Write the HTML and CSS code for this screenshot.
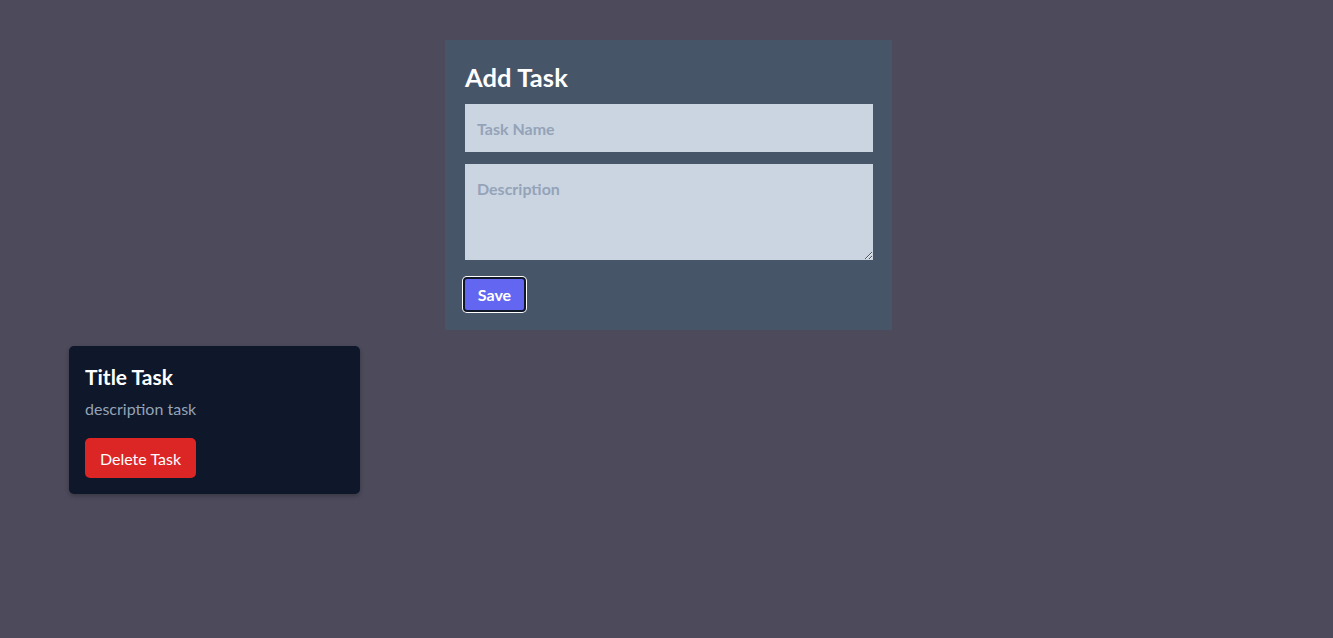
FILE: index.html
```html
<!DOCTYPE html>
<html lang="en">
<head>
<meta charset="utf-8">
<title>Tasks</title>
<link rel="stylesheet" href="styles.css">
</head>
<body>
<main class="page">
  <form class="task-form">
    <h2 class="form-title">Add Task</h2>
    <input class="field" type="text" placeholder="Task Name">
    <textarea class="field area" placeholder="Description"></textarea>
    <div class="actions"><button type="button" class="save-btn">Save</button></div>
  </form>
  <section class="task-list">
    <article class="task-card">
      <h3 class="task-title">Title Task</h3>
      <p class="task-desc">description task</p>
      <button type="button" class="delete-btn">Delete Task</button>
    </article>
  </section>
</main>
</body>
</html>
```
FILE: styles.css
```css
* { box-sizing: border-box; }
html, body { margin: 0; padding: 0; }
body {
  background: #4c4a5b;
  font-family: Lato, "Noto Sans", sans-serif;
  min-height: 638px;
}
.page {
  padding-top: 40px;
}
.task-form {
  width: 447px;
  margin: 0 0 16px 445px;
  background: #475569;
  padding: 22px 19px 18px 20px;
  display: flex;
  flex-direction: column;
}
.form-title {
  margin: 0 0 12px;
  color: #ffffff;
  font-size: 25.5px;
  font-weight: 700;
  line-height: 30px;
  letter-spacing: 0.1px;
}
.field {
  display: block;
  width: 408px;
  border: none;
  background: #cbd5e1;
  padding: 12px;
  font-family: Lato, "Noto Sans", sans-serif;
  font-size: 16px;
  font-weight: 700;
  color: #1e293b;
  outline: none;
}
.field::placeholder { color: #94a3b8; }
input.field { height: 48px; margin-bottom: 12px; }
.area { height: 96px; resize: vertical; padding-top: 15px; margin-bottom: 16px; }
.actions { display: flex; }
.save-btn {
  background: #6366f1;
  color: #ffffff;
  font-family: Lato, "Noto Sans", sans-serif;
  font-weight: 700;
  font-size: 16px;
  width: 63px;
  height: 35px;
  margin-left: -2px;
  border: 2px solid #111827;
  border-radius: 4px;
  box-shadow: 0 0 0 1px #ffffff;
  padding: 0;
  margin-top: 1px;
}
.task-list {
  padding-left: 69px;
  display: flex;
}
.task-card {
  width: 291px;
  background: #0f172a;
  border-radius: 5px;
  padding: 18px 16px 16px;
  box-shadow: 0 2px 4px rgba(0,0,0,0.25);
}
.task-title {
  margin: 0;
  color: #ffffff;
  font-size: 21px;
  font-weight: 700;
  line-height: 26px;
}
.task-desc {
  margin: 9px 0 19px;
  color: #94a3b8;
  font-size: 16px;
  line-height: 20px;
}
.delete-btn {
  background: #dc2626;
  color: #ffffff;
  border: none;
  border-radius: 5px;
  width: 111px;
  height: 40px;
  font-family: Lato, "Noto Sans", sans-serif;
  font-size: 16px;
  padding: 0;
}
```
